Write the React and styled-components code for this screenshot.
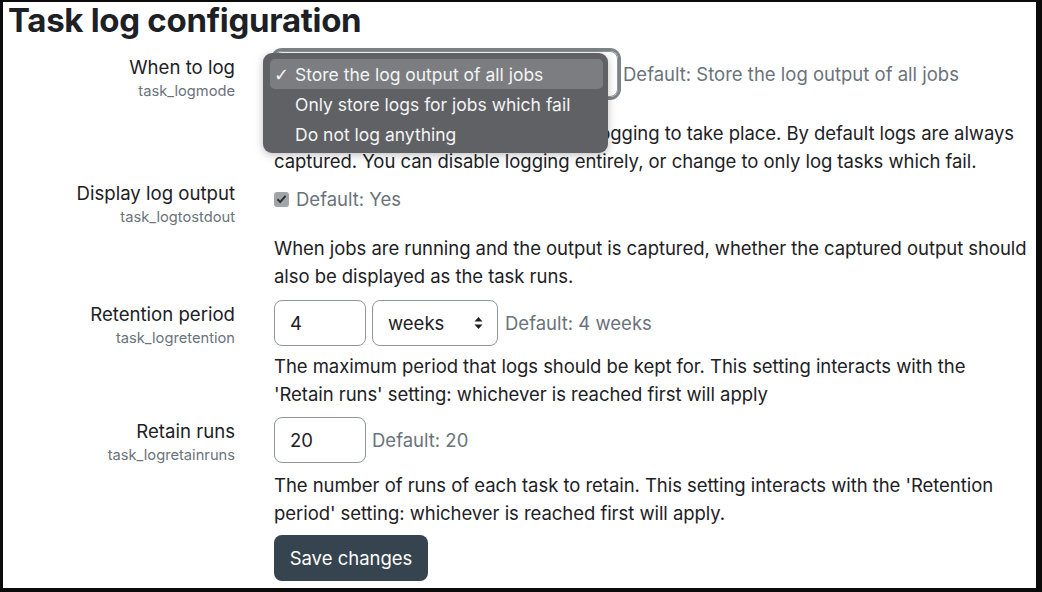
import React from 'react';
import styled, { createGlobalStyle } from 'styled-components';

const GlobalStyle = createGlobalStyle`
  html, body {
    margin: 0;
    padding: 0;
    background: #000;
  }
  body {
    font-family: Inter, "Liberation Sans", sans-serif;
    color: #1d2125;
  }
`;

const Frame = styled.div`
  box-sizing: border-box;
  width: 1042px;
  height: 592px;
  border-style: solid;
  border-color: #0b0b0b;
  border-width: 2px 6px 4px 3px;
  background: #fff;
  overflow: hidden;
`;

const Title = styled.h2`
  margin: 0 0 13px 0;
  padding-left: 5px;
  font-size: 33px;
  line-height: 36px;
  font-weight: 700;
  letter-spacing: -0.3px;
`;

const Form = styled.div`
  display: flex;
  flex-direction: column;
`;

const Row = styled.div`
  display: grid;
  grid-template-columns: 232px 1fr;
  column-gap: 39px;
  margin-top: ${p => p.$top || 0}px;
`;

const LabelCol = styled.div`
  text-align: right;
  padding-top: ${p => p.$pad || 0}px;
`;

const Label = styled.div`
  font-size: 18.6px;
  line-height: 28px;
`;

const SubLabel = styled.div`
  font-size: 14.7px;
  line-height: 20px;
  color: #6a737b;
`;

const Body = styled.div`
  display: flex;
  flex-direction: column;
  gap: ${p => p.$gap || 6}px;
  padding-top: ${p => p.$pad || 0}px;
  position: relative;
`;

const Controls = styled.div`
  display: flex;
  align-items: center;
  gap: 6px;
  height: ${p => p.$h || 46}px;
`;

const Default = styled.span`
  font-size: 18.5px;
  color: #6a737b;
  margin-left: ${p => p.$ml || 0}px;
`;

const Desc = styled.div`
  max-width: 754px;
  font-size: 18.5px;
  line-height: 28px;
  letter-spacing: -0.05px;
`;

const TextInput = styled.div`
  box-sizing: border-box;
  width: 92px;
  height: 46px;
  border: 1px solid #8f959e;
  border-radius: 8px;
  padding-left: 15px;
  display: flex;
  align-items: center;
  font-size: 18.5px;
`;

const SelectBox = styled.div`
  box-sizing: border-box;
  width: ${p => p.$w}px;
  height: 46px;
  border: 1px solid #8f959e;
  border-radius: 8px;
  padding: 0 14px 0 15px;
  display: flex;
  align-items: center;
  justify-content: space-between;
  font-size: 18.5px;
  box-shadow: ${p => (p.$focus ? '0 0 0 3px #7e8388' : 'none')};
`;

const Menu = styled.div`
  position: absolute;
  left: -11px;
  top: 2px;
  width: 345px;
  box-sizing: border-box;
  padding: 6px 5px 4px 7px;
  background: #5f6165;
  border-radius: 9px;
  box-shadow: 0 2px 8px rgba(0, 0, 0, 0.25);
  z-index: 2;
`;

const MenuItem = styled.div`
  display: flex;
  align-items: center;
  height: 30px;
  padding-left: 4px;
  border-radius: 5px;
  font-size: 17.5px;
  color: #f4f4f4;
  background: ${p => (p.$active ? '#7b7d81' : 'transparent')};
`;

const Check = styled.span`
  width: 21px;
  font-size: 18px;
  font-family: "DejaVu Sans", sans-serif;
`;

const CheckLine = styled.div`
  display: flex;
  align-items: center;
  height: 28px;
  gap: 7px;
`;

const CheckBox = styled.span`
  width: 15px;
  height: 15px;
  border-radius: 3px;
  background: #a2a5a8;
  display: flex;
  align-items: center;
  justify-content: center;
`;

const SaveButton = styled.button`
  width: 154px;
  height: 46px;
  border: none;
  border-radius: 8px;
  background: #35444e;
  color: #fff;
  font-family: inherit;
  font-size: 18.5px;
  padding: 0;
`;

const Arrows = () => (
  <svg width="9" height="14" viewBox="0 0 9 14">
    <path d="M4.5 1 L8.5 5.5 H0.5 Z" fill="#1d2125" />
    <path d="M4.5 13 L8.5 8.5 H0.5 Z" fill="#1d2125" />
  </svg>
);

const App = () => {
  return (
    <>
      <GlobalStyle />
      <Frame>
        <Title>Task log configuration</Title>
        <Form>
          <Row>
            <LabelCol $pad={2}>
              <Label>When to log</Label>
              <SubLabel>task_logmode</SubLabel>
            </LabelCol>
            <Body $gap={22}>
              <Controls>
                <SelectBox $w={344} $focus>
                  <span>Store the log output of all jobs</span>
                  <Arrows />
                </SelectBox>
                <Default $ml={-1}>Default: Store the log output of all jobs</Default>
              </Controls>
              <Desc>
                You can choose when you wish task logging to take place. By default logs are always
                captured. You can disable logging entirely, or change to only log tasks which fail.
              </Desc>
              <Menu>
                <MenuItem $active><Check>✓</Check>Store the log output of all jobs</MenuItem>
                <MenuItem><Check />Only store logs for jobs which fail</MenuItem>
                <MenuItem><Check />Do not log anything</MenuItem>
              </Menu>
            </Body>
          </Row>

          <Row $top={4}>
            <LabelCol>
              <Label>Display log output</Label>
              <SubLabel>task_logtostdout</SubLabel>
            </LabelCol>
            <Body $gap={21} $pad={6}>
              <CheckLine>
                <CheckBox>
                  <svg width="11" height="10" viewBox="0 0 11 10">
                    <path d="M1.5 5.2 L4.2 8 L9.6 1.8" stroke="#2f3236" strokeWidth="2" fill="none" />
                  </svg>
                </CheckBox>
                <Default>Default: Yes</Default>
              </CheckLine>
              <Desc>
                When jobs are running and the output is captured, whether the captured output should
                also be displayed as the task runs.
              </Desc>
            </Body>
          </Row>

          <Row $top={10}>
            <LabelCol>
              <Label>Retention period</Label>
              <SubLabel>task_logretention</SubLabel>
            </LabelCol>
            <Body $gap={6}>
              <Controls>
                <TextInput>4</TextInput>
                <SelectBox $w={126}>
                  <span>weeks</span>
                  <Arrows />
                </SelectBox>
                <Default $ml={1}>Default: 4 weeks</Default>
              </Controls>
              <Desc>
                The maximum period that logs should be kept for. This setting interacts with the
                'Retain runs' setting: whichever is reached first will apply
              </Desc>
            </Body>
          </Row>

          <Row $top={9}>
            <LabelCol>
              <Label>Retain runs</Label>
              <SubLabel>task_logretainruns</SubLabel>
            </LabelCol>
            <Body $gap={8}>
              <Controls>
                <TextInput>20</TextInput>
                <Default>Default: 20</Default>
              </Controls>
              <Desc>
                The number of runs of each task to retain. This setting interacts with the 'Retention
                period' setting: whichever is reached first will apply.
              </Desc>
              <div>
                <SaveButton>Save changes</SaveButton>
              </div>
            </Body>
          </Row>
        </Form>
      </Frame>
    </>
  );
};

export default App;
